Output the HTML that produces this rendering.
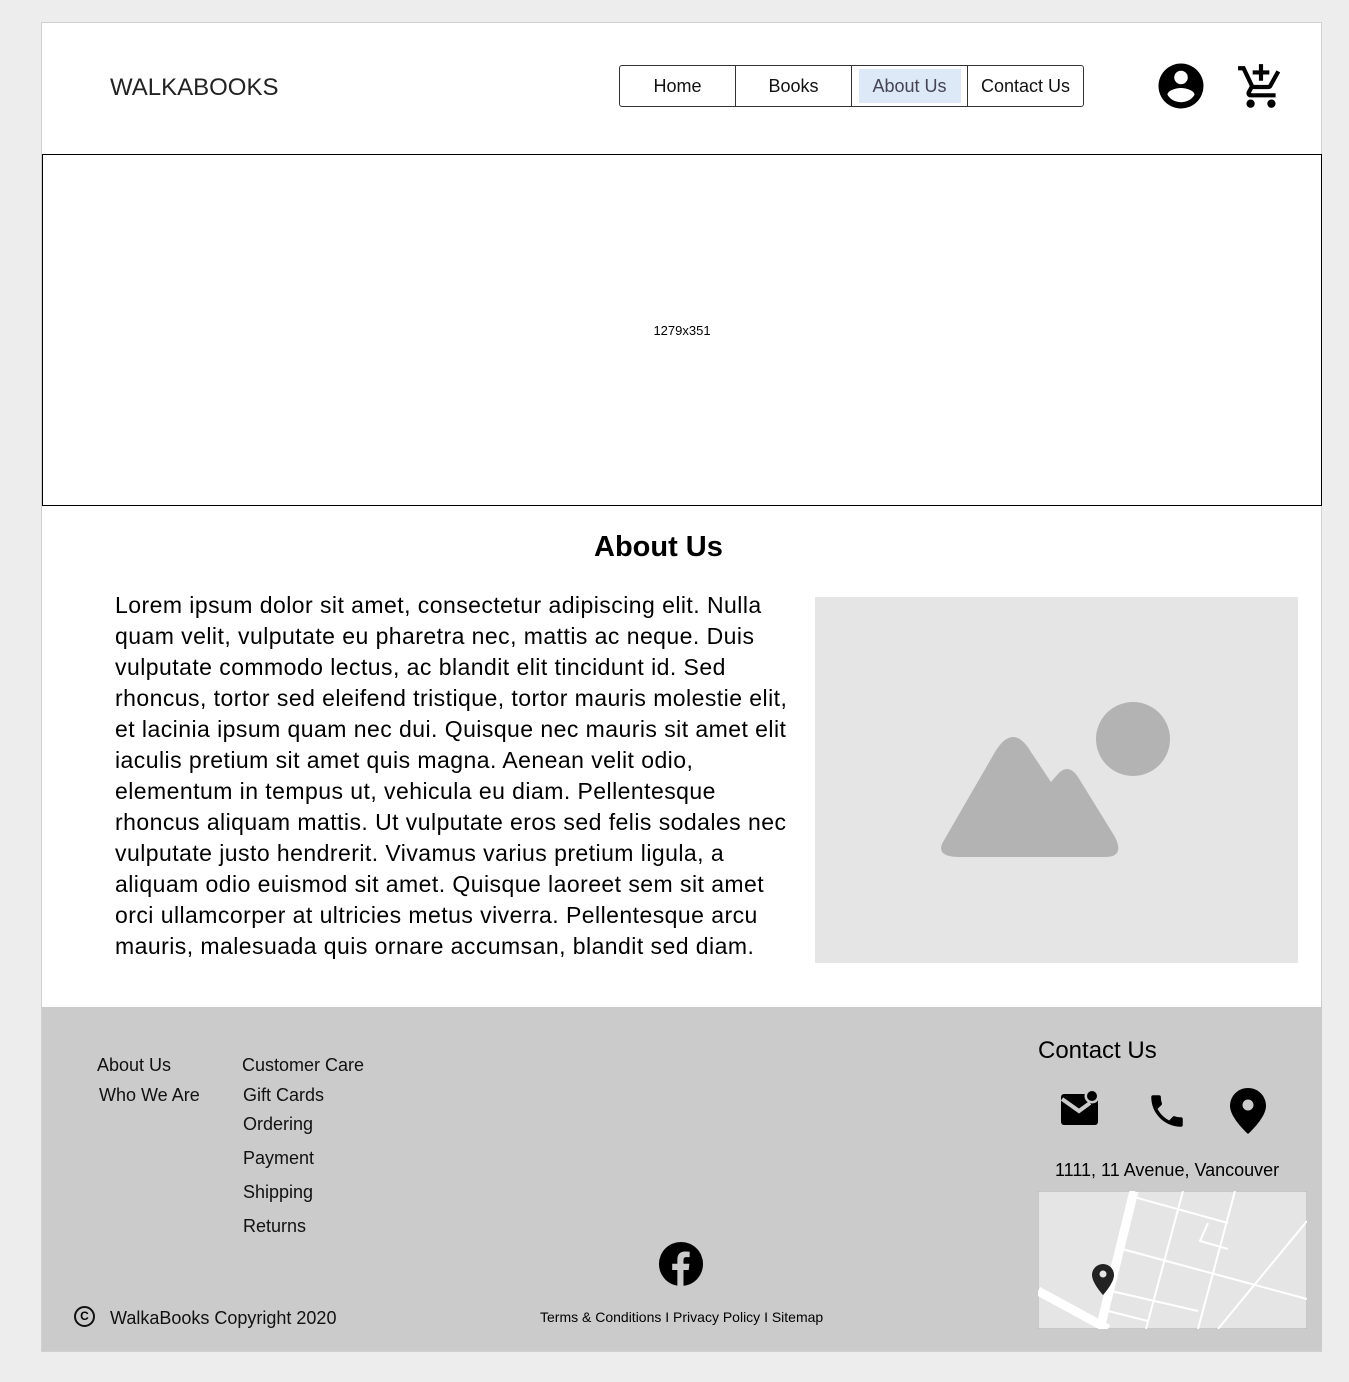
<!DOCTYPE html>
<html><head><meta charset="utf-8"><style>
*{margin:0;padding:0;box-sizing:border-box}
body{width:1349px;height:1382px;background:#ededed;font-family:"Liberation Sans",Arial,sans-serif;position:relative;overflow:hidden;color:#000}
.a{position:absolute}
#main{left:41px;top:22px;width:1281px;height:1330px;background:#fff;border:1px solid #d0d0d0}
.nav{left:619px;top:65px;width:465px;height:42px;border:1px solid #333;border-radius:3px;display:flex;background:#fff}
.nav div{flex:1;display:flex;align-items:center;justify-content:center;font-size:18px;border-right:1px solid #333;color:#111}
.nav div:last-child{border-right:none}
.ft{font-size:18px;color:#111}
</style></head><body>
<div id="main" class="a"></div>
<div class="a" style="left:110px;top:74px;font-size:24px;color:#222">WALKABOOKS</div>
<div class="a nav"><div>Home</div><div>Books</div><div style="border-right:1px solid #333;flex:none;width:116px;padding:0"><span style="background:#dde9f6;color:#445;display:flex;align-items:center;justify-content:center;width:102px;height:34px">About Us</span></div><div>Contact Us</div></div>
<svg class="a" style="left:1154px;top:59px" width="54" height="54" viewBox="0 0 24 24"><path d="M12 2a10 10 0 1 0 0 20 10 10 0 0 0 0-20zm0 3.2a3 3 0 1 1 0 6 3 3 0 0 1 0-6zm0 14c-2.6 0-4.9-1.3-6-3.3 0-2 4-3 6-3s6 1 6 3c-1.1 2-3.4 3.3-6 3.3z"/></svg>
<svg class="a" style="left:1236px;top:62px" width="50" height="50" viewBox="0 0 24 24"><path d="M11 9h2V6h3V4h-3V1h-2v3H8v2h3v3zm-4 9a2 2 0 1 0 0 4 2 2 0 0 0 0-4zm10 0a2 2 0 1 0 0 4 2 2 0 0 0 0-4zM7.2 14.8l.03-.12.9-1.68h7.45c.75 0 1.41-.41 1.75-1.03l3.86-7.01L19.42 4l-3.87 7H8.53L4.27 2H1v2h2l3.6 7.59-1.35 2.45c-.16.28-.25.61-.25.96 0 1.1.9 2 2 2h12v-2H7.42a.25.25 0 0 1-.22-.2z"/></svg>
<div class="a" style="left:42px;top:154px;width:1280px;height:352px;border:1px solid #000;display:flex;align-items:center;justify-content:center;font-size:13px">1279x351</div>
<div class="a" style="left:594px;top:531px;font-size:29px;font-weight:bold">About Us</div>
<div class="a" style="left:115px;top:590px;font-size:23px;line-height:31px;white-space:nowrap;letter-spacing:0.45px">Lorem ipsum dolor sit amet, consectetur adipiscing elit. Nulla<br>quam velit, vulputate eu pharetra nec, mattis ac neque. Duis<br>vulputate commodo lectus, ac blandit elit tincidunt id. Sed<br>rhoncus, tortor sed eleifend tristique, tortor mauris molestie elit,<br>et lacinia ipsum quam nec dui. Quisque nec mauris sit amet elit<br>iaculis pretium sit amet quis magna. Aenean velit odio,<br>elementum in tempus ut, vehicula eu diam. Pellentesque<br>rhoncus aliquam mattis. Ut vulputate eros sed felis sodales nec<br>vulputate justo hendrerit. Vivamus varius pretium ligula, a<br>aliquam odio euismod sit amet. Quisque laoreet sem sit amet<br>orci ullamcorper at ultricies metus viverra. Pellentesque arcu<br>mauris, malesuada quis ornare accumsan, blandit sed diam.</div>
<div class="a" style="left:815px;top:597px;width:483px;height:366px;background:#e5e5e5"></div>
<svg class="a" style="left:815px;top:597px" width="483" height="366"><circle cx="318" cy="142" r="37" fill="#b3b3b3"/><path d="M128 245 L180 155 Q198 125 216 155 L236 185 L242 178 Q253 165 263 180 L300 240 Q310 260 290 260 L145 260 Q120 260 128 245Z" fill="#b3b3b3"/></svg>
<div class="a" style="left:42px;top:1007px;width:1280px;height:344px;background:#cbcbcb"></div>
<div class="a ft" style="left:97px;top:1055px">About Us</div>
<div class="a ft" style="left:99px;top:1085px">Who We Are</div>
<div class="a ft" style="left:242px;top:1055px">Customer Care</div>
<div class="a ft" style="left:243px;top:1085px">Gift Cards</div>
<div class="a ft" style="left:243px;top:1114px">Ordering</div>
<div class="a ft" style="left:243px;top:1148px">Payment</div>
<div class="a ft" style="left:243px;top:1182px">Shipping</div>
<div class="a ft" style="left:243px;top:1216px">Returns</div>
<div class="a" style="left:74px;top:1306px;width:21px;height:21px;border:2px solid #111;border-radius:50%;font-size:12px;font-weight:bold;text-align:center;line-height:17px">C</div>
<div class="a ft" style="left:110px;top:1308px">WalkaBooks Copyright 2020</div>
<svg class="a" style="left:658px;top:1241px" width="46" height="46" viewBox="0 0 24 24"><circle cx="12" cy="12" r="11.5"/><path d="M13.3 23.5v-8.4h2.7l.4-3.2h-3.1V9.9c0-.9.3-1.5 1.6-1.5h1.6V5.6c-.3 0-1.3-.1-2.4-.1-2.4 0-4 1.4-4 4.1v2.3H7.4v3.2h2.7v8.4z" fill="#cbcbcb"/></svg>
<div class="a" style="left:540px;top:1309px;font-size:14px">Terms &amp; Conditions I Privacy Policy I Sitemap</div>
<div class="a" style="left:1038px;top:1037px;font-size:24px">Contact Us</div>
<svg class="a" style="left:1060px;top:1090px" width="40" height="38" viewBox="0 0 40 38"><rect x="1" y="4" width="37" height="31" rx="3"/><path d="M2 9 L19 21 L30 13" stroke="#cbcbcb" stroke-width="4" fill="none"/><circle cx="32" cy="6" r="7.5" fill="#cbcbcb"/><circle cx="32" cy="6" r="5"/></svg>
<svg class="a" style="left:1146px;top:1090px" width="42" height="42" viewBox="0 0 24 24"><path d="M6.6 10.8c1.4 2.8 3.8 5.1 6.6 6.6l2.2-2.2c.3-.3.7-.4 1-.2 1.1.4 2.3.6 3.6.6.6 0 1 .4 1 1V20c0 .6-.4 1-1 1C10.6 21 3 13.4 3 4c0-.6.4-1 1-1h3.5c.6 0 1 .4 1 1 0 1.3.2 2.5.6 3.6.1.3 0 .7-.2 1z"/></svg>
<svg class="a" style="left:1228px;top:1086px" width="40" height="50" viewBox="0 0 40 50"><path d="M20 2C10 2 2 10 2 20c0 12 18 28 18 28s18-16 18-28C38 10 30 2 20 2z"/><circle cx="20" cy="19" r="5.5" fill="#cbcbcb"/></svg>
<div class="a" style="left:1055px;top:1160px;font-size:18px">1111, 11 Avenue, Vancouver</div>
<svg class="a" style="left:1038px;top:1191px" width="269" height="138"><rect width="269" height="138" fill="#e5e5e5" stroke="#aaa"/><g stroke="#fff" fill="none"><path d="M96 0 L62 138" stroke-width="9"/><path d="M0 100 L70 138" stroke-width="9"/><path d="M96 6 L190 32 M84 58 L269 108 M73 100 L160 120 M145 0 L108 138 M197 0 L160 138 M170 32 L162 50 L190 58 M269 30 L180 138 M70 120 L110 130" stroke-width="2"/></g><path d="M65 73a11 11 0 0 0-11 11c0 8 11 20 11 20s11-12 11-20a11 11 0 0 0-11-11z" fill="#222"/><circle cx="65" cy="83" r="3.5" fill="#e5e5e5"/></svg>
</body></html>
